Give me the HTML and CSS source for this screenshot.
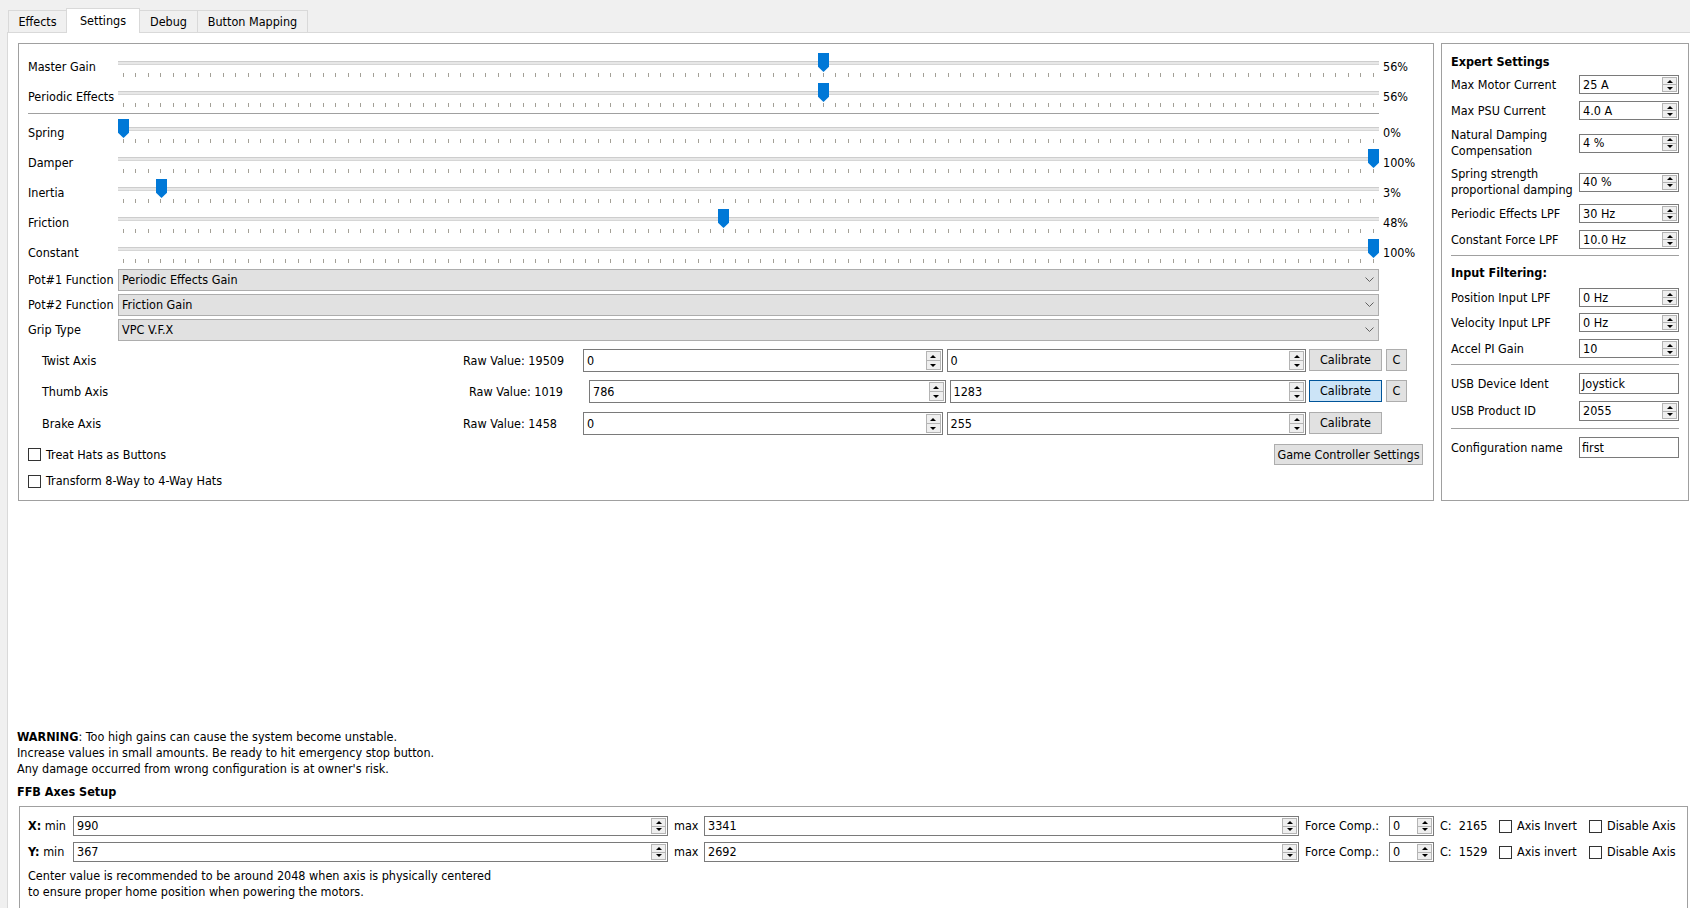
FILE: index.html
```html
<!DOCTYPE html>
<html>
<head>
<meta charset="utf-8">
<title>Settings</title>
<link rel="stylesheet" href="styles.css">
</head>
<body>
<div class="tabs">
  <div class="tab t-effects">Effects</div>
  <div class="tab t-settings sel">Settings</div>
  <div class="tab t-debug">Debug</div>
  <div class="tab t-bm">Button Mapping</div>
</div>
<div class="pane">
  <div class="top">
    <section class="group main">
      <div class="srow"><span class="slabel">Master Gain</span><div class="slider"><div class="groove"></div><div class="ticks"></div><div class="handle" style="left:700px"></div></div><span class="pct">56%</span></div>
      <div class="srow"><span class="slabel">Periodic Effects</span><div class="slider"><div class="groove"></div><div class="ticks"></div><div class="handle" style="left:700px"></div></div><span class="pct">56%</span></div>
      <div class="hsep"></div>
      <div class="srow"><span class="slabel">Spring</span><div class="slider"><div class="groove"></div><div class="ticks"></div><div class="handle" style="left:0px"></div></div><span class="pct">0%</span></div>
      <div class="srow"><span class="slabel">Damper</span><div class="slider"><div class="groove"></div><div class="ticks"></div><div class="handle" style="left:1250px"></div></div><span class="pct">100%</span></div>
      <div class="srow"><span class="slabel">Inertia</span><div class="slider"><div class="groove"></div><div class="ticks"></div><div class="handle" style="left:38px"></div></div><span class="pct">3%</span></div>
      <div class="srow"><span class="slabel">Friction</span><div class="slider"><div class="groove"></div><div class="ticks"></div><div class="handle" style="left:600px"></div></div><span class="pct">48%</span></div>
      <div class="srow"><span class="slabel">Constant</span><div class="slider"><div class="groove"></div><div class="ticks"></div><div class="handle" style="left:1250px"></div></div><span class="pct">100%</span></div>

      <div class="crow first"><span class="clabel">Pot#1 Function</span><div class="combo"><span>Periodic Effects Gain</span><svg class="chev" width="9" height="6" viewBox="0 0 9 6"><polyline points="0.5,0.5 4.5,4.5 8.5,0.5" fill="none" stroke="#606060" stroke-width="1"/></svg></div></div>
      <div class="crow"><span class="clabel">Pot#2 Function</span><div class="combo"><span>Friction Gain</span><svg class="chev" width="9" height="6" viewBox="0 0 9 6"><polyline points="0.5,0.5 4.5,4.5 8.5,0.5" fill="none" stroke="#606060" stroke-width="1"/></svg></div></div>
      <div class="crow"><span class="clabel">Grip Type</span><div class="combo"><span>VPC V.F.X</span><svg class="chev" width="9" height="6" viewBox="0 0 9 6"><polyline points="0.5,0.5 4.5,4.5 8.5,0.5" fill="none" stroke="#606060" stroke-width="1"/></svg></div></div>

      <div class="axis-row r1">
        <span class="alabel">Twist Axis</span>
        <span class="raw">Raw Value: 19509</span>
        <div class="spinbox ax"><span class="val">0</span><span class="spin"><i class="up"></i><i class="dn"></i></span></div>
        <div class="spinbox ax second"><span class="val">0</span><span class="spin"><i class="up"></i><i class="dn"></i></span></div>
        <button class="btn cal">Calibrate</button>
        <button class="btn cbtn">C</button>
      </div>
      <div class="axis-row r2">
        <span class="alabel">Thumb Axis</span>
        <span class="raw shift">Raw Value: 1019</span>
        <div class="spinbox ax"><span class="val">786</span><span class="spin"><i class="up"></i><i class="dn"></i></span></div>
        <div class="spinbox ax second"><span class="val">1283</span><span class="spin"><i class="up"></i><i class="dn"></i></span></div>
        <button class="btn cal active">Calibrate</button>
        <button class="btn cbtn">C</button>
      </div>
      <div class="axis-row r3">
        <span class="alabel">Brake Axis</span>
        <span class="raw">Raw Value: 1458</span>
        <div class="spinbox ax"><span class="val">0</span><span class="spin"><i class="up"></i><i class="dn"></i></span></div>
        <div class="spinbox ax second"><span class="val">255</span><span class="spin"><i class="up"></i><i class="dn"></i></span></div>
        <button class="btn cal">Calibrate</button>
        <span class="cbtn-space"></span>
      </div>

      <div class="chk-row first">
        <label class="chk"><span class="box"></span><span>Treat Hats as Buttons</span></label>
        <button class="btn gcs">Game Controller Settings</button>
      </div>
      <div class="chk-row second">
        <label class="chk"><span class="box"></span><span>Transform 8-Way to 4-Way Hats</span></label>
      </div>
    </section>

    <section class="group expert">
      <div class="etitle">Expert Settings</div>
      <div class="erow m5"><span>Max Motor Current</span><div class="spinbox es"><span class="val">25 A</span><span class="spin"><i class="up"></i><i class="dn"></i></span></div></div>
      <div class="erow m7"><span>Max PSU Current</span><div class="spinbox es"><span class="val">4.0 A</span><span class="spin"><i class="up"></i><i class="dn"></i></span></div></div>
      <div class="erow m7 two"><span>Natural Damping<br>Compensation</span><div class="spinbox es"><span class="val">4 %</span><span class="spin"><i class="up"></i><i class="dn"></i></span></div></div>
      <div class="erow m7 two"><span>Spring strength<br>proportional damping</span><div class="spinbox es"><span class="val">40 %</span><span class="spin"><i class="up"></i><i class="dn"></i></span></div></div>
      <div class="erow m6"><span>Periodic Effects LPF</span><div class="spinbox es"><span class="val">30 Hz</span><span class="spin"><i class="up"></i><i class="dn"></i></span></div></div>
      <div class="erow m7"><span>Constant Force LPF</span><div class="spinbox es"><span class="val">10.0 Hz</span><span class="spin"><i class="up"></i><i class="dn"></i></span></div></div>
      <div class="esep m6"></div>
      <div class="etitle sub">Input Filtering:</div>
      <div class="erow m6"><span>Position Input LPF</span><div class="spinbox es"><span class="val">0 Hz</span><span class="spin"><i class="up"></i><i class="dn"></i></span></div></div>
      <div class="erow m6"><span>Velocity Input LPF</span><div class="spinbox es"><span class="val">0 Hz</span><span class="spin"><i class="up"></i><i class="dn"></i></span></div></div>
      <div class="erow m7"><span>Accel PI Gain</span><div class="spinbox es"><span class="val">10</span><span class="spin"><i class="up"></i><i class="dn"></i></span></div></div>
      <div class="esep m6"></div>
      <div class="erow m8"><span>USB Device Ident</span><div class="lineedit"><span class="val">Joystick</span></div></div>
      <div class="erow m7"><span>USB Product ID</span><div class="spinbox es tall"><span class="val">2055</span><span class="spin"><i class="up"></i><i class="dn"></i></span></div></div>
      <div class="esep m7"></div>
      <div class="erow m8"><span>Configuration name</span><div class="lineedit"><span class="val">first</span></div></div>
    </section>
  </div>

  <div class="warning">
    <div><b>WARNING</b>: Too high gains can cause the system become unstable.</div>
    <div>Increase values in small amounts. Be ready to hit emergency stop button.</div>
    <div>Any damage occurred from wrong configuration is at owner's risk.</div>
  </div>
  <div class="ffb-title">FFB Axes Setup</div>
  <div class="group ffb">
    <div class="frow">
      <span class="flbl"><b>X:</b> min</span>
      <div class="spinbox fin"><span class="val">990</span><span class="spin"><i class="up"></i><i class="dn"></i></span></div>
      <span class="fmax">max</span>
      <div class="spinbox fin"><span class="val">3341</span><span class="spin"><i class="up"></i><i class="dn"></i></span></div>
      <span class="fcomp">Force Comp.:</span>
      <div class="spinbox fsmall"><span class="val">0</span><span class="spin"><i class="up"></i><i class="dn"></i></span></div>
      <span class="fc">C:  2165</span>
      <label class="chk"><span class="box"></span><span class="finv">Axis Invert</span></label>
      <label class="chk"><span class="box"></span><span>Disable Axis</span></label>
    </div>
    <div class="frow second">
      <span class="flbl"><b>Y:</b> min</span>
      <div class="spinbox fin"><span class="val">367</span><span class="spin"><i class="up"></i><i class="dn"></i></span></div>
      <span class="fmax">max</span>
      <div class="spinbox fin"><span class="val">2692</span><span class="spin"><i class="up"></i><i class="dn"></i></span></div>
      <span class="fcomp">Force Comp.:</span>
      <div class="spinbox fsmall"><span class="val">0</span><span class="spin"><i class="up"></i><i class="dn"></i></span></div>
      <span class="fc">C:  1529</span>
      <label class="chk"><span class="box"></span><span class="finv">Axis invert</span></label>
      <label class="chk"><span class="box"></span><span>Disable Axis</span></label>
    </div>
    <div class="fnote">
      <div>Center value is recommended to be around 2048 when axis is physically centered</div>
      <div>to ensure proper home position when powering the motors.</div>
    </div>
  </div>
</div>
</body>
</html>
```

FILE: styles.css
```css
* { box-sizing: border-box; }
html, body { margin: 0; padding: 0; }
body {
  background: #f0f0f0;
  font-family: "DejaVu Sans Condensed", "DejaVu Sans", sans-serif;
  font-size: 12.5px;
  line-height: 16px;
  color: #000;
  width: 1690px;
  height: 908px;
  overflow: hidden;
}

/* tabs */
.tabs {
  display: flex;
  align-items: flex-end;
  height: 32px;
  padding-left: 8px;
  position: relative;
  z-index: 2;
}
.tab {
  height: 22px;
  border: 1px solid #d9d9d9;
  border-bottom: none;
  background: #f0f0f0;
  display: flex;
  align-items: center;
  justify-content: center;
}
.t-effects { width: 59px; }
.t-settings { width: 74px; margin-left: -1px; }
.t-debug { width: 59px; margin-left: -1px; }
.t-bm { width: 111px; margin-left: -1px; }
.tab.sel {
  height: 25px;
  margin-bottom: -1px;
  background: #fff;
  position: relative;
  z-index: 3;
}

/* pane */
.pane {
  margin-left: 7px;
  width: 1700px;
  height: 900px;
  background: #fff;
  border: 1px solid #d9d9d9;
  padding: 10px 0 0 10px;
  position: relative;
  z-index: 1;
}
.top { display: flex; }
.group { border: 1px solid #a0a0a0; }
.main {
  width: 1416px;
  height: 458px;
  padding: 8px 10px 0 9px;
}
.expert {
  width: 248px;
  height: 458px;
  margin-left: 7px;
  padding: 10px 9px 0 9px;
}

/* sliders */
.srow {
  display: flex;
  align-items: center;
  height: 30px;
}
.slabel { width: 90px; white-space: nowrap; }
.slider {
  position: relative;
  width: 1261px;
  height: 30px;
}
.groove {
  position: absolute;
  left: 0;
  right: 0;
  top: 9px;
  height: 4px;
  background: #e7e7e7;
  border-top: 1px solid #cdcdcd;
  border-bottom: 1px solid #d6d6d6;
}
.ticks {
  position: absolute;
  left: 5px;
  top: 21px;
  width: 1251px;
  height: 4px;
  background: repeating-linear-gradient(to right,
    #a3a097 0px, #a3a097 1px, transparent 1px, transparent 12px,
    #a3a097 12px, #a3a097 13px, transparent 13px, transparent 25px);
}
.handle {
  position: absolute;
  top: 1px;
  width: 11px;
  height: 19px;
  background: #0078d7;
  clip-path: polygon(0 0, 100% 0, 100% 72%, 50% 100%, 0 72%);
}
.pct { margin-left: 4px; }
.hsep {
  width: 1351px;
  height: 1px;
  background: #a0a0a0;
  margin: 1px 0 4px 0;
}

/* combos */
.crow {
  display: flex;
  align-items: center;
  height: 22px;
  margin-top: 3px;
}
.crow.first { margin-top: 1px; }
.clabel { width: 90px; white-space: nowrap; }
.combo {
  width: 1261px;
  height: 22px;
  background: #e1e1e1;
  border: 1px solid #adadad;
  display: flex;
  align-items: center;
  justify-content: space-between;
  padding: 0 4px 0 3px;
}
.chev { margin-right: 0; }

/* spinboxes */
.spinbox {
  display: flex;
  align-items: stretch;
  background: #fff;
  border: 1px solid #7a7a7a;
}
.spinbox .val {
  flex: 1;
  display: flex;
  align-items: center;
  padding-left: 3px;
  white-space: nowrap;
  overflow: hidden;
}
.spin {
  width: 15px;
  margin: 1px 1px 1px 0;
  display: flex;
  flex-direction: column;
}
.spin i {
  flex: 1;
  border: 1px solid #b4b4b4;
  background: #efefef;
  display: flex;
  align-items: center;
  justify-content: center;
}
.spin i + i { margin-top: -1px; }
.spin i.up::after {
  content: "";
  border-left: 3px solid transparent;
  border-right: 3px solid transparent;
  border-bottom: 3px solid #000;
}
.spin i.dn::after {
  content: "";
  border-left: 3px solid transparent;
  border-right: 3px solid transparent;
  border-top: 3px solid #000;
}

/* axis rows */
.axis-row {
  display: flex;
  align-items: flex-start;
  width: 1379px;
  height: 23px;
}
.axis-row.r1 { margin-top: 8px; }
.axis-row.r2 { margin-top: 8px; }
.axis-row.r3 { margin-top: 9px; }
.alabel { width: 435px; padding-left: 14px; line-height: 23px; }
.raw { width: 120px; line-height: 23px; white-space: nowrap; }
.raw.shift { width: 126px; padding-left: 6px; }
.spinbox.ax { flex: 1; height: 23px; }
.spinbox.ax.second { margin-left: 4px; }
.btn {
  font: inherit;
  color: #000;
  background: #e1e1e1;
  border: 1px solid #adadad;
  height: 22px;
  padding: 0;
  margin: 0;
}
.btn.cal { width: 73px; margin-left: 3px; }
.btn.cal.active { background: #cce4f7; border-color: #005499; }
.btn.cbtn { width: 21px; margin-left: 4px; }
.cbtn-space { width: 21px; margin-left: 4px; }

/* checkboxes */
.chk {
  display: flex;
  align-items: center;
  white-space: nowrap;
}
.chk .box {
  width: 13px;
  height: 13px;
  border: 1px solid #333;
  background: #fff;
  margin-right: 5px;
  flex: none;
}
.chk-row {
  display: flex;
  align-items: center;
  justify-content: space-between;
}
.chk-row.first { margin-top: 9px; height: 21px; }
.chk-row.second { margin-top: 6px; height: 20px; }
.btn.gcs { width: 149px; height: 21px; }

/* expert panel */
.etitle { font-weight: bold; line-height: 16px; }
.etitle.sub { line-height: 18px; margin-top: 8px; }
.erow {
  display: flex;
  align-items: center;
  justify-content: space-between;
  min-height: 19px;
  white-space: nowrap;
}
.erow.two { height: 32px; }
.m5 { margin-top: 5px; }
.m6 { margin-top: 6px; }
.m7 { margin-top: 7px; }
.m8 { margin-top: 8px; }
.spinbox.es { width: 100px; height: 19px; }
.spinbox.es.tall { height: 20px; }
.lineedit {
  width: 100px;
  height: 21px;
  border: 1px solid #7a7a7a;
  background: #fff;
  display: flex;
  align-items: center;
}
.lineedit .val { padding-left: 2px; }
.esep { height: 1px; background: #a0a0a0; }

/* bottom */
.warning { margin-top: 228px; margin-left: -1px; }
.ffb-title { font-weight: bold; margin-top: 7px; margin-left: -1px; }
.ffb {
  margin-top: 6px;
  margin-left: 1px;
  width: 1669px;
  height: 120px;
  padding: 9px 0 0 8px;
}
.frow {
  display: flex;
  align-items: center;
  height: 20px;
  white-space: nowrap;
}
.frow.second { margin-top: 6px; }
.flbl { width: 45px; }
.spinbox.fin { width: 595px; height: 20px; }
.fmax { margin-left: 6px; width: 30px; }
.fcomp { margin-left: 6px; width: 84px; }
.spinbox.fsmall { width: 45px; height: 20px; }
.fc { margin-left: 6px; width: 59px; white-space: pre; }
.finv { width: 72px; }
.fnote { margin-top: 6px; }
```
